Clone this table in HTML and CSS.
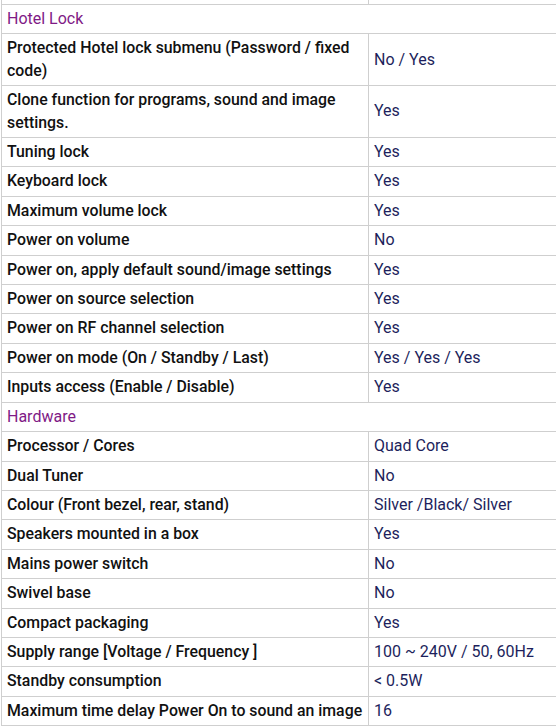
FILE: index.html
```html
<!DOCTYPE html>
<html>
<head>
<meta charset="utf-8">
<link rel="stylesheet" href="styles.css">
</head>
<body>
<table class="spec">
  <tr class="stub"><td class="label"></td><td class="value"></td></tr>
  <tr class="section"><td colspan="2">Hotel Lock</td></tr>
  <tr><td class="label">Protected Hotel lock submenu (Password / fixed code)</td><td class="value">No / Yes</td></tr>
  <tr><td class="label">Clone function for programs, sound and image settings.</td><td class="value">Yes</td></tr>
  <tr><td class="label">Tuning lock</td><td class="value">Yes</td></tr>
  <tr><td class="label">Keyboard lock</td><td class="value">Yes</td></tr>
  <tr><td class="label">Maximum volume lock</td><td class="value">Yes</td></tr>
  <tr><td class="label">Power on volume</td><td class="value">No</td></tr>
  <tr><td class="label">Power on, apply default sound/image settings</td><td class="value">Yes</td></tr>
  <tr><td class="label">Power on source selection</td><td class="value">Yes</td></tr>
  <tr><td class="label">Power on RF channel selection</td><td class="value">Yes</td></tr>
  <tr><td class="label">Power on mode (On / Standby / Last)</td><td class="value">Yes / Yes / Yes</td></tr>
  <tr><td class="label">Inputs access (Enable / Disable)</td><td class="value">Yes</td></tr>
  <tr class="section"><td colspan="2">Hardware</td></tr>
  <tr><td class="label">Processor / Cores</td><td class="value">Quad Core</td></tr>
  <tr><td class="label">Dual Tuner</td><td class="value">No</td></tr>
  <tr><td class="label">Colour (Front bezel, rear, stand)</td><td class="value">Silver /Black/ Silver</td></tr>
  <tr><td class="label">Speakers mounted in a box</td><td class="value">Yes</td></tr>
  <tr><td class="label">Mains power switch</td><td class="value">No</td></tr>
  <tr><td class="label">Swivel base</td><td class="value">No</td></tr>
  <tr><td class="label">Compact packaging</td><td class="value">Yes</td></tr>
  <tr><td class="label">Supply range [Voltage / Frequency ]</td><td class="value">100 ~ 240V / 50, 60Hz</td></tr>
  <tr><td class="label">Standby consumption</td><td class="value">&lt; 0.5W</td></tr>
  <tr><td class="label">Maximum time delay Power On to sound an image</td><td class="value">16</td></tr>
</table>
</body>
</html>
```
FILE: styles.css
```css
html, body {
  margin: 0;
  padding: 0;
  background: #ffffff;
  overflow: hidden;
}
body {
  padding-left: 1px;
  font-family: Roboto, "Liberation Sans", sans-serif;
  font-size: 16px;
  line-height: 22.4px;
}
.spec {
  border-collapse: collapse;
  table-layout: fixed;
  width: 620px;
}
.spec td {
  border: 1px solid #cfcfcf;
  padding: 3px 4px 3px 5px;
  vertical-align: middle;
}
.spec .label {
  width: 360px;
  padding-right: 1px;
  color: #111111;
  font-weight: 500;
  font-size: 15.85px;
}
.spec .value {
  color: #1d1f5c;
  font-weight: 400;
}
.spec .stub td {
  height: 4px;
  padding-top: 0;
  padding-bottom: 0;
  border-top: none;
}
.spec .section td {
  color: #7f1a86;
  font-weight: 400;
  font-size: 16px;
}
```
